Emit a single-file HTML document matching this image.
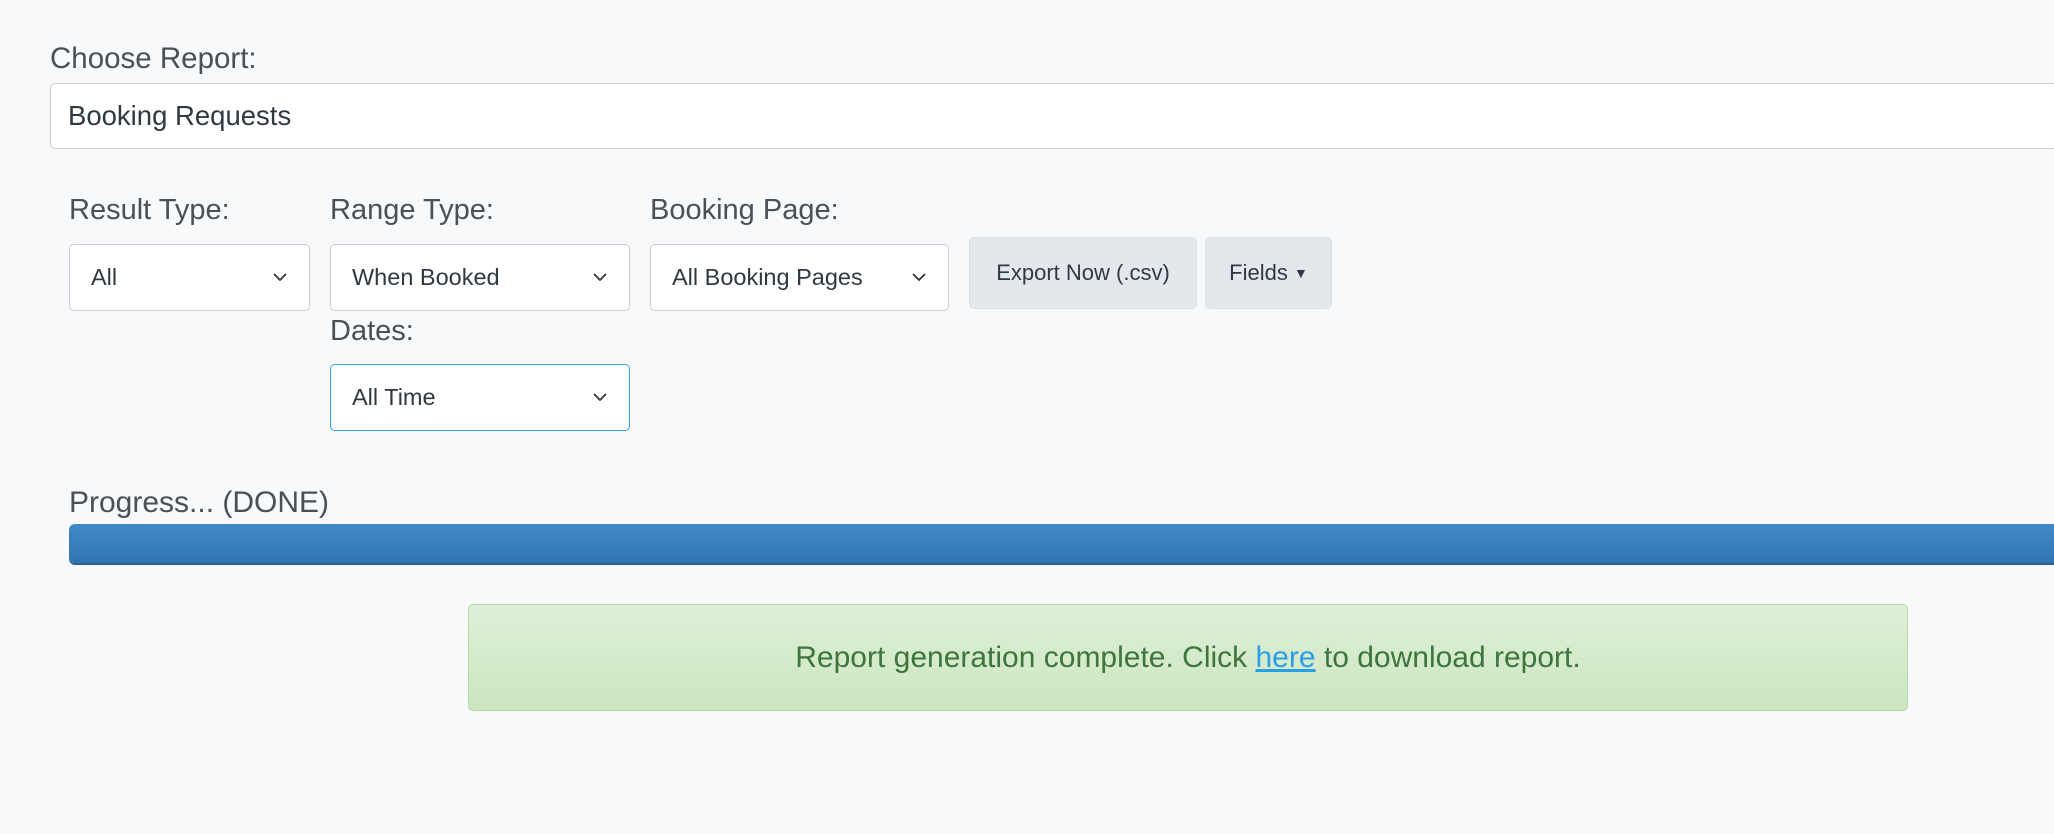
<!DOCTYPE html>
<html><head><style>
*{box-sizing:border-box;margin:0;padding:0}
body{width:2054px;height:834px;background:#f7f9fb;font-family:"Liberation Sans",sans-serif;position:relative;overflow:hidden;color:#495057}
.lbl{position:absolute;font-size:29px;color:#4a5056}
.sel{position:absolute;background:#fff;border:1.5px solid #c9cdd6;border-radius:5px;font-size:23.5px;color:#303840;display:flex;align-items:center;padding-left:21px}
.sel svg{position:absolute;right:22px;top:50%;margin-top:-5px}
.btn{position:absolute;background:#e4e7eb;border-radius:5px;font-size:22px;color:#2f3a44;display:flex;align-items:center;justify-content:center;border:1px solid #dde0e5}
</style></head><body>
<div class="lbl" style="left:50px;top:42px;font-size:29.5px">Choose Report:</div>
<div class="sel" style="left:50px;top:83px;width:2030px;height:66px;font-size:27.5px;padding-left:17px">Booking Requests</div>

<div class="lbl" style="left:69px;top:194px">Result Type:</div>
<div class="lbl" style="left:330px;top:194px">Range Type:</div>
<div class="lbl" style="left:650px;top:194px">Booking Page:</div>

<div class="sel" style="left:69px;top:244px;width:241px;height:67px">All<svg width="14" height="9" viewBox="0 0 14 9"><path d="M1 1l6 6 6-6" fill="none" stroke="#333" stroke-width="1.8"/></svg></div>
<div class="sel" style="left:330px;top:244px;width:300px;height:67px">When Booked<svg width="14" height="9" viewBox="0 0 14 9"><path d="M1 1l6 6 6-6" fill="none" stroke="#333" stroke-width="1.8"/></svg></div>
<div class="sel" style="left:650px;top:244px;width:299px;height:67px">All Booking Pages<svg width="14" height="9" viewBox="0 0 14 9"><path d="M1 1l6 6 6-6" fill="none" stroke="#333" stroke-width="1.8"/></svg></div>
<div class="btn" style="left:969px;top:237px;width:228px;height:72px">Export Now (.csv)</div>
<div class="btn" style="left:1205px;top:237px;width:127px;height:72px">Fields&nbsp;<span style="font-size:14px">▼</span></div>

<div class="lbl" style="left:330px;top:315px">Dates:</div>
<div class="sel" style="left:330px;top:364px;width:300px;height:67px;border-color:#3aa0e0">All Time<svg width="14" height="9" viewBox="0 0 14 9"><path d="M1 1l6 6 6-6" fill="none" stroke="#333" stroke-width="1.8"/></svg></div>

<div class="lbl" style="left:69px;top:486px;font-size:30px">Progress... (DONE)</div>
<div style="position:absolute;left:69px;top:524px;width:2020px;height:39px;border-radius:6px;background:linear-gradient(#4089c9,#3274b1);box-shadow:0 2px 0 #2c6096"></div>

<div style="position:absolute;left:468px;top:604px;width:1440px;height:107px;border:1.5px solid #b3dca4;border-radius:5px;background:linear-gradient(#dfefd8,#cce6bf);display:flex;align-items:center;justify-content:center;font-size:30px;color:#3c763d">Report generation complete. Click&nbsp;<span style="color:#2a9fe6;text-decoration:underline">here</span>&nbsp;to download report.</div>
</body></html>
